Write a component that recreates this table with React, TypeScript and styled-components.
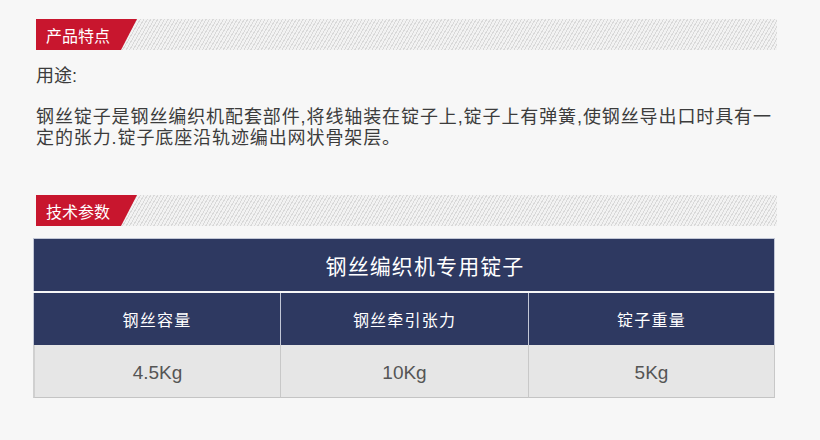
import React from "react";
import styled, { createGlobalStyle } from "styled-components";

const Global = createGlobalStyle`
  html, body { margin: 0; padding: 0; background: #f7f7f7; }
  body { font-family: "Liberation Sans", "Noto Sans CJK SC", sans-serif; }
`;

const Page = styled.div`
  width: 820px;
  height: 440px;
  box-sizing: border-box;
  padding: 19px 0 0 36px;
  background: #f7f7f7;
  overflow: hidden;
`;

const Column = styled.div`
  width: 741px;
  display: flex;
  flex-direction: column;
`;

const SectionBar = styled.div<{ $top?: number }>`
  height: 31px;
  margin-top: ${(p) => p.$top ?? 0}px;
  display: flex;
  background: repeating-linear-gradient(120deg, #d9d9d9 0 1px, #f2f2f2 1px 3px);
`;

const SectionTab = styled.div`
  width: 101px;
  height: 100%;
  box-sizing: border-box;
  padding-left: 10px;
  display: flex;
  align-items: center;
  background: #c8162e;
  color: #fff;
  font-size: 16px;
  letter-spacing: 0;
  clip-path: polygon(0 0, 100% 0, calc(100% - 16px) 100%, 0 100%);
`;

const Label = styled.div`
  margin-top: 16px;
  font-size: 18px;
  line-height: 21px;
  color: #3c3c3c;
`;

const Para = styled.p`
  margin: 20px 0 0;
  font-size: 18px;
  line-height: 21px;
  letter-spacing: 0.9px;
  color: #3c3c3c;
`;

const Table = styled.div`
  margin: 12px 0 0 -3px;
  width: 742px;
  display: flex;
  flex-direction: column;
  gap: 2px;
  background: #f7f7f7;
`;

const TitleRow = styled.div`
  height: 53px;
  box-sizing: border-box;
  padding-left: 42px;
  border: 1px solid #c2c7d6;
  border-bottom: none;
  background: #2e3961;
  color: #fff;
  font-size: 21px;
  letter-spacing: 1.1px;
  display: flex;
  align-items: center;
  justify-content: center;
`;

const Grid = styled.div`
  display: grid;
  grid-template-columns: 247px 248px 247px;
`;

const HeadCell = styled.div`
  height: 52px;
  box-sizing: border-box;
  background: #2e3961;
  color: #fff;
  font-size: 16px;
  letter-spacing: 1.2px;
  display: flex;
  align-items: center;
  justify-content: center;
  border-left: 1px solid #c2c7d6;
  &:last-child { border-right: 1px solid #c2c7d6; }
`;

const DataCell = styled.div`
  height: 53px;
  box-sizing: border-box;
  padding-top: 3px;
  background: #e6e6e6;
  color: #555;
  font-size: 19px;
  display: flex;
  align-items: center;
  justify-content: center;
  border-left: 1px solid #c8c8c8;
  border-bottom: 1px solid #c4c4c4;
  &:first-child { border-left: 2px solid #d0d0d0; }
  &:last-child { border-right: 1px solid #c8c8c8; }
`;

const DataGrid = styled(Grid)`
  margin-top: -2px;
`;

export default function App() {
  return (
    <Page>
      <Global />
      <Column>
        <SectionBar>
          <SectionTab>产品特点</SectionTab>
        </SectionBar>
        <Label>用途:</Label>
        <Para>
          钢丝锭子是钢丝编织机配套部件,将线轴装在锭子上,锭子上有弹簧,使钢丝导出口时具有一定的张力.锭子底座沿轨迹编出网状骨架层。
        </Para>
        <SectionBar $top={46}>
          <SectionTab>技术参数</SectionTab>
        </SectionBar>
        <Table>
          <TitleRow>钢丝编织机专用锭子</TitleRow>
          <Grid>
            <HeadCell>钢丝容量</HeadCell>
            <HeadCell>钢丝牵引张力</HeadCell>
            <HeadCell>锭子重量</HeadCell>
          </Grid>
          <DataGrid>
            <DataCell>4.5Kg</DataCell>
            <DataCell>10Kg</DataCell>
            <DataCell>5Kg</DataCell>
          </DataGrid>
        </Table>
      </Column>
    </Page>
  );
}
